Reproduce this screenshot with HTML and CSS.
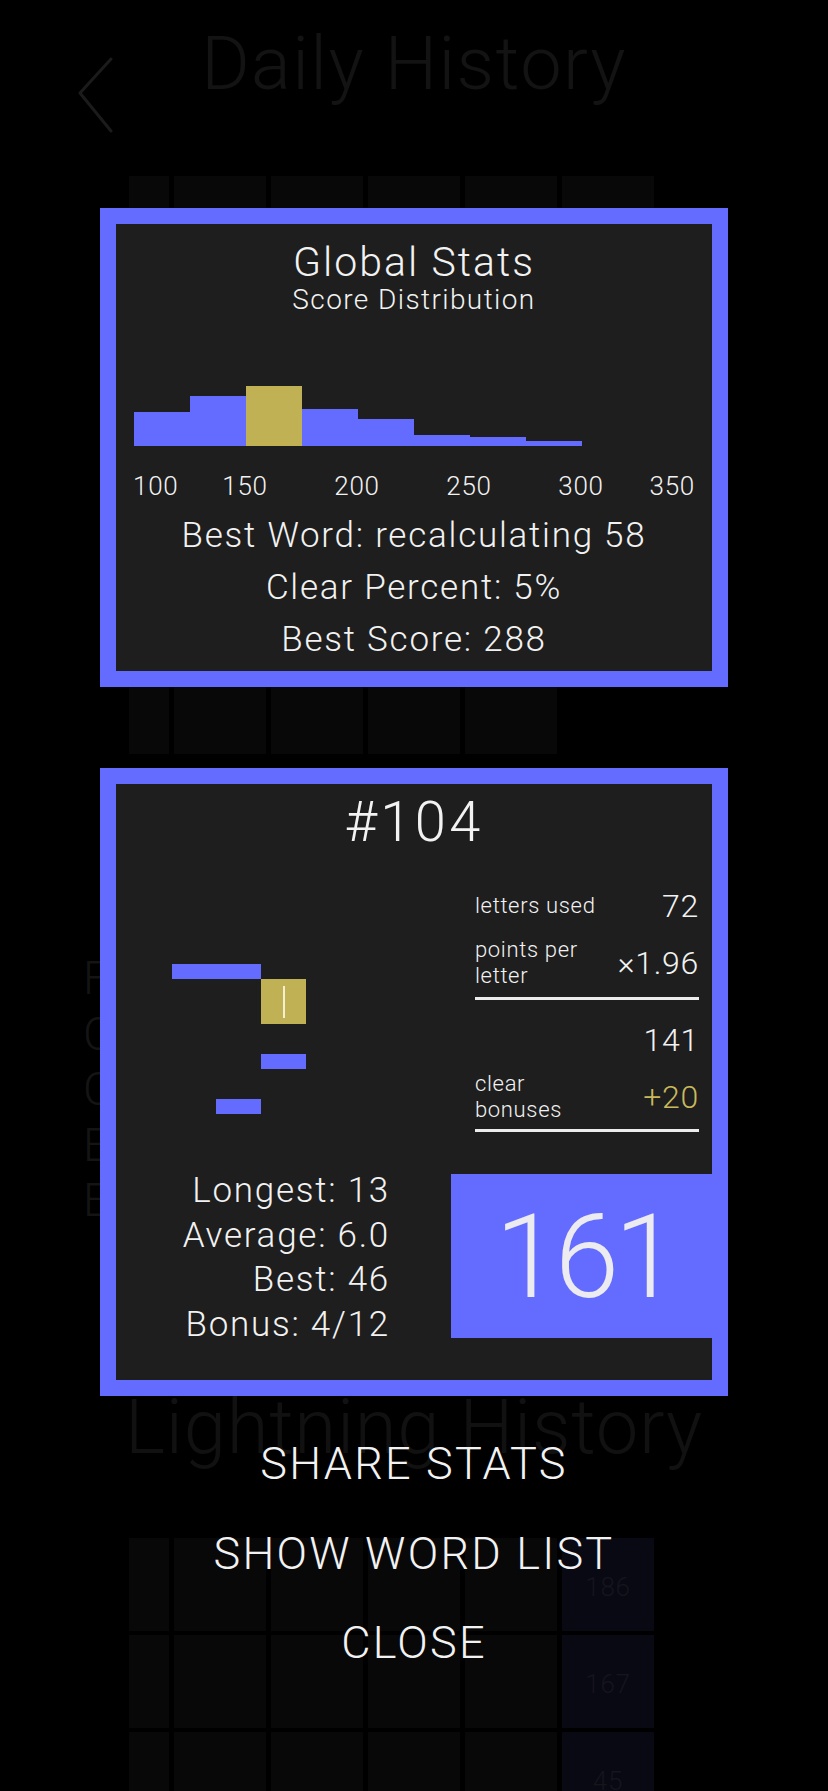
FILE: index.html
```html
<!DOCTYPE html>
<html>
<head>
<meta charset="utf-8">
<title>Stats</title>
<link rel="stylesheet" href="styles.css">
</head>
<body>
<div class="page">
  <header class="bg-header">
    <svg class="back" viewBox="0 0 36 76" width="36" height="76"><path d="M34 2 L3 36 L34 74"/></svg>
    <h1 class="bg-title">Daily History</h1>
    <div></div>
  </header>
  <div class="bg-grid first">
    <div class="c"></div><div class="c"></div><div class="c"></div><div class="c"></div><div class="c"></div><div class="c"></div>
    <div class="c"></div><div class="c"></div><div class="c"></div><div class="c"></div><div class="c"></div><div class="c"></div>
    <div class="c"></div><div class="c"></div><div class="c"></div><div class="c"></div><div class="c"></div><div class="c"></div>
    <div class="c"></div><div class="c"></div><div class="c"></div><div class="c"></div><div class="c"></div><div class="c"></div>
    <div class="c"></div><div class="c"></div><div class="c"></div><div class="c"></div><div class="c"></div><div class="c"></div>
    <div class="c"></div><div class="c"></div><div class="c"></div><div class="c"></div><div class="c"></div><div class="c empty"></div>
  </div>
  <div class="bg-letters">
    <div>F</div><div>C</div><div>C</div><div>E</div><div>E</div>
  </div>
  <h2 class="bg-title2">Lightning History</h2>
  <div class="bg-grid second">
    <div class="c"></div><div class="c"></div><div class="c"></div><div class="c"></div><div class="c"></div><div class="c score">186</div>
    <div class="c"></div><div class="c"></div><div class="c"></div><div class="c"></div><div class="c"></div><div class="c score">167</div>
    <div class="c"></div><div class="c"></div><div class="c"></div><div class="c"></div><div class="c"></div><div class="c score">45</div>
  </div>
</div>

<div class="overlay">
  <section class="card global">
    <div class="g-title">Global Stats</div>
    <div class="g-sub">Score Distribution</div>
    <div class="hist">
      <div class="bar" style="height:34px"></div>
      <div class="bar" style="height:50px"></div>
      <div class="bar mine" style="height:60px"></div>
      <div class="bar" style="height:37px"></div>
      <div class="bar" style="height:27px"></div>
      <div class="bar" style="height:11px"></div>
      <div class="bar" style="height:9px"></div>
      <div class="bar" style="height:5px"></div>
    </div>
    <div class="axis">
      <span class="tick first">100</span>
      <span class="tick">150</span>
      <span class="tick">200</span>
      <span class="tick">250</span>
      <span class="tick">300</span>
      <span class="tick last">350</span>
    </div>
    <div class="g-stats">
      <div>Best Word: recalculating 58</div>
      <div>Clear Percent: 5%</div>
      <div>Best Score: 288</div>
    </div>
  </section>

  <section class="card daily">
    <div class="d-title">#104</div>
    <div class="d-mid">
      <div class="words">
        <div class="wbar a"></div>
        <div class="wcell gold"><span class="cursor"></span></div>
        <div class="wbar b"></div>
        <div class="wbar c"></div>
      </div>
      <div class="calc">
        <div class="group">
          <div class="row">
            <span class="lbl">letters used</span>
            <span class="val">72</span>
          </div>
          <div class="row">
            <span class="lbl">points per<br>letter</span>
            <span class="val">×1.96</span>
          </div>
        </div>
        <div class="group second">
          <div class="row end">
            <span class="val">141</span>
          </div>
          <div class="row">
            <span class="lbl">clear<br>bonuses</span>
            <span class="val bonus">+20</span>
          </div>
        </div>
      </div>
    </div>
    <div class="d-bottom">
      <div class="summary">
        <div>Longest: 13</div>
        <div>Average: 6.0</div>
        <div>Best: 46</div>
        <div>Bonus: 4/12</div>
      </div>
      <div class="total">161</div>
    </div>
  </section>

  <nav class="actions">
    <div class="action">SHARE STATS</div>
    <div class="action">SHOW WORD LIST</div>
    <div class="action">CLOSE</div>
  </nav>
</div>
</body>
</html>
```

FILE: styles.css
```css
* { box-sizing: border-box; }

html, body {
  margin: 0;
  padding: 0;
  background: #000;
}

body {
  width: 828px;
  height: 1791px;
  overflow: hidden;
  position: relative;
  font-family: "Roboto", "Liberation Sans", sans-serif;
  font-weight: 300;
  letter-spacing: 0.045em;
  color: #f2f2f2;
}

/* ---------- dimmed background page ---------- */
.page {
  width: 828px;
  height: 1791px;
  display: flex;
  flex-direction: column;
}

.bg-header {
  display: grid;
  grid-template-columns: 1fr auto 1fr;
  grid-template-rows: 84px;
  margin-top: 22px;
}

.back {
  margin-left: 77px;
  margin-top: 35px;
  fill: none;
  stroke: #1b1b1b;
  stroke-width: 3;
  stroke-linecap: round;
  stroke-linejoin: round;
}

.bg-title {
  margin: 0;
  font-size: 74px;
  line-height: 84px;
  font-weight: 300;
  letter-spacing: 0.02em;
  color: #131313;
}

.bg-grid {
  display: grid;
  grid-template-columns: 40px repeat(5, 92px);
  grid-auto-rows: 93px;
  column-gap: 5px;
  row-gap: 4px;
  margin-left: 129px;
}

.bg-grid.first { margin-top: 70px; }
.bg-grid.second { margin-top: 68px; }

.bg-grid .c { background: #080808; }
.bg-grid .c.empty { background: transparent; }
.bg-grid .c.score {
  background: #090913;
  color: #15151d;
  font-size: 26px;
  display: flex;
  align-items: center;
  justify-content: center;
  padding-top: 6px;
}

.bg-letters {
  margin-top: 197px;
  margin-left: 83px;
  font-size: 46px;
  line-height: 55.5px;
  color: #141414;
}

.bg-title2 {
  margin: 155px 0 0;
  text-align: center;
  font-size: 76px;
  line-height: 86px;
  font-weight: 300;
  letter-spacing: 0.01em;
  color: #111111;
}

/* ---------- overlay ---------- */
.overlay {
  position: absolute;
  top: 0;
  left: 0;
  width: 828px;
  height: 1791px;
  display: flex;
  flex-direction: column;
  align-items: center;
  padding-top: 208px;
}

.card {
  width: 628px;
  border: 16px solid #646bff;
  background: #1e1e1e;
}

.card.global { height: 479px; padding-top: 14px; }
.card.daily { height: 628px; margin-top: 81px; padding-top: 6px; }

/* global card */
.g-title {
  text-align: center;
  font-size: 41px;
  line-height: 48px;
  letter-spacing: 0.05em;
}

.g-sub {
  text-align: center;
  font-size: 28px;
  line-height: 28px;
  letter-spacing: 0.05em;
}

.hist {
  margin: 62px 0 0 18px;
  height: 70px;
  display: flex;
  align-items: flex-end;
}

.bar {
  width: 56px;
  background: #646bff;
}

.bar.mine { background: #c0b155; }

.axis {
  margin: 25px 0 0 17px;
  display: flex;
  font-size: 26px;
  line-height: 30px;
}

.tick { width: 112px; text-align: center; }
.tick.first { width: 56px; text-align: left; }
.tick.last { width: 58px; text-align: right; }

.g-stats {
  margin-top: 9px;
  text-align: center;
  font-size: 35px;
  line-height: 52px;
  letter-spacing: 0.05em;
}

/* daily card */
.d-title {
  text-align: center;
  font-size: 56px;
  line-height: 64px;
  letter-spacing: 0.06em;
}

.d-mid {
  display: flex;
  height: 279px;
}

.words {
  position: relative;
  width: 359px;
  flex: none;
}

.wbar, .wcell {
  position: absolute;
  background: #646bff;
}

.wbar { height: 15px; width: 45px; }
.wbar.a { left: 56px; top: 110px; width: 89px; }
.wbar.b { left: 145px; top: 200px; }
.wbar.c { left: 100px; top: 245px; }

.wcell.gold {
  left: 145px;
  top: 125px;
  width: 45px;
  height: 45px;
  background: #c0b155;
  display: flex;
  align-items: center;
  justify-content: center;
}

.cursor {
  width: 2px;
  height: 32px;
  background: #f4eed2;
}

.calc {
  width: 224px;
  margin-top: 33px;
}

.group {
  display: flex;
  flex-direction: column;
  gap: 12px;
  padding-bottom: 8px;
  border-bottom: 3px solid #ececec;
}

.group.second {
  margin-top: 21px;
  padding-bottom: 6px;
}

.row {
  display: flex;
  justify-content: space-between;
  align-items: center;
}

.row.end { justify-content: flex-end; }

.lbl {
  font-size: 22px;
  line-height: 26px;
  letter-spacing: 0.03em;
}

.val {
  font-size: 32px;
  line-height: 38px;
}

.val.bonus { color: #c8b95c; }

.d-bottom {
  display: flex;
  align-items: flex-start;
}

.summary {
  width: 274px;
  margin-top: 36px;
  text-align: right;
  font-size: 35px;
  line-height: 44.67px;
  letter-spacing: 0.05em;
}

.total {
  margin-top: 41px;
  margin-left: auto;
  width: 261px;
  height: 164px;
  background: #646bff;
  color: #ebebf0;
  font-size: 116px;
  font-weight: 300;
  letter-spacing: -0.04em;
  display: flex;
  align-items: center;
  justify-content: center;
  padding-top: 2px;
  padding-left: 6px;
}

/* actions */
.actions {
  margin-top: 23px;
  text-align: center;
}

.action {
  font-size: 45px;
  line-height: 89.5px;
  letter-spacing: 0.05em;
}
```
